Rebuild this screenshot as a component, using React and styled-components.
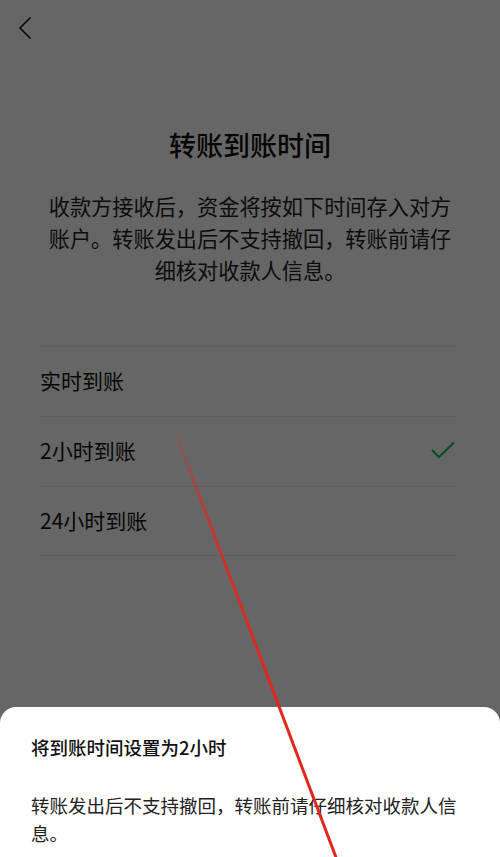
import styled, { createGlobalStyle } from "styled-components";

const GlobalStyle = createGlobalStyle`
  body {
    margin: 0;
    font-family: "Noto Sans CJK SC", "Noto Sans", sans-serif;
    background: #666;
  }
`;

const Page = styled.div`
  position: relative;
  width: 500px;
  height: 857px;
  overflow: hidden;
  background: #fff;
  color: #111;
`;

const Header = styled.div`
  height: 55px;
  padding-left: 18px;
  display: flex;
  align-items: center;
  box-sizing: border-box;
`;

const Title = styled.h1`
  margin: 72px 0 0;
  font-size: 27px;
  line-height: 36px;
  font-weight: 500;
  text-align: center;
`;

const Desc = styled.p`
  margin: 27px 44px 0;
  font-size: 21.2px;
  line-height: 32px;
  text-align: center;
  color: #222;
`;

const List = styled.div`
  margin: 60px 43px 0 40px;
`;

const Row = styled.div`
  height: 70px;
  display: flex;
  align-items: center;
  justify-content: space-between;
  border-top: 1px solid #eeeeee;
  font-size: 21px;
  line-height: 28px;
  padding-bottom: 3px;
  box-sizing: border-box;
  padding-right: 2px;
  &:last-child {
    border-bottom: 1px solid #eeeeee;
  }
`;

const Overlay = styled.div`
  position: absolute;
  inset: 0;
  background: rgba(0, 0, 0, 0.6);
`;

const Sheet = styled.div`
  position: absolute;
  left: 0;
  right: 0;
  bottom: 0;
  height: 150px;
  background: #fff;
  border-radius: 16px 16px 0 0;
  padding: 27px 31px 0;
  box-sizing: border-box;
`;

const SheetTitle = styled.div`
  font-size: 18.5px;
  line-height: 26px;
  font-weight: 500;
  color: #111;
`;

const SheetText = styled.div`
  margin-top: 31px;
  font-size: 18.5px;
  line-height: 28px;
  color: #222;
`;

const Marker = styled.svg`
  position: absolute;
  inset: 0;
  pointer-events: none;
`;

const options = [
  { label: "实时到账" },
  { label: "2小时到账", checked: true },
  { label: "24小时到账" },
];

function App() {
  return (
    <>
      <GlobalStyle />
      <Page>
        <Header>
          <svg width="14" height="24" viewBox="0 0 14 24">
            <path d="M12.5 1.5 L2 12 L12.5 22.5" fill="none" stroke="#111" strokeWidth="1.6" />
          </svg>
        </Header>
        <Title>转账到账时间</Title>
        <Desc>收款方接收后，资金将按如下时间存入对方账户。转账发出后不支持撤回，转账前请仔细核对收款人信息。</Desc>
        <List>
          {options.map((o) => (
            <Row key={o.label}>
              <span>{o.label}</span>
              {o.checked && (
                <svg width="24" height="18" viewBox="0 0 24 18">
                  <path d="M1 9 L8 16 L23 1.5" fill="none" stroke="#07c160" strokeWidth="2" />
                </svg>
              )}
            </Row>
          ))}
        </List>
        <Overlay />
        <Sheet>
          <SheetTitle>将到账时间设置为2小时</SheetTitle>
          <SheetText>转账发出后不支持撤回，转账前请仔细核对收款人信息。</SheetText>
        </Sheet>
        <Marker width="500" height="857" viewBox="0 0 500 857">
          <defs>
            <linearGradient id="mk" gradientUnits="userSpaceOnUse" x1="170" y1="418" x2="337" y2="860">
              <stop offset="0" stopColor="#e3261c" stopOpacity="0" />
              <stop offset="0.25" stopColor="#e3261c" stopOpacity="0.75" />
              <stop offset="0.6" stopColor="#e3261c" stopOpacity="1" />
            </linearGradient>
          </defs>
          <line x1="170" y1="418" x2="337" y2="860" stroke="url(#mk)" strokeWidth="3" />
        </Marker>
      </Page>
    </>
  );
}

export default App;
